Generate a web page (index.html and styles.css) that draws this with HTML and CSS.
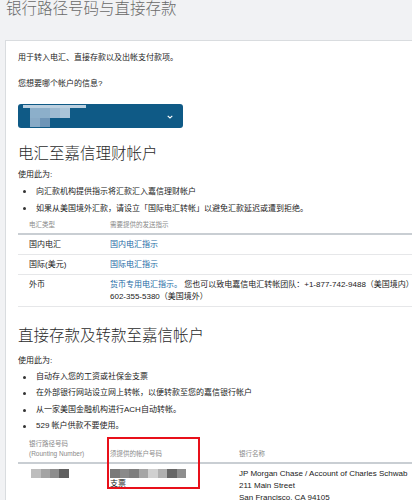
FILE: index.html
```html
<!DOCTYPE html>
<html lang="zh-CN">
<head>
  <meta charset="UTF-8" />
  <meta name="viewport" content="width=device-width, initial-scale=1" />
  <title>银行路径号码与直接存款</title>
  <link rel="stylesheet" href="styles.css">
</head>
<body>
  <h1 class="page-title">银行路径号码与直接存款</h1>

  <main class="card">
    <p class="intro">用于转入电汇、直接存款以及出帐支付款项。</p>
    <p class="ask">您想要哪个帐户的信息?</p>

    <div class="account-select" role="button" aria-label="选择帐户">
      <!-- masked account name -->
      <span class="mask">
        <span class="m-bar"></span>
        <span class="m-row"><i class="s1"></i><i class="s2"></i><i class="s3"></i></span>
        <span class="m-row"><i class="s4"></i><i class="s5"></i></span>
      </span>
      <svg class="chevron" width="6" height="4" viewBox="0 0 6 4" aria-hidden="true">
        <path d="M0.7 0.8 L3 3 L5.3 0.8" fill="none" stroke="#fff" stroke-width="1.1"/>
      </svg>
    </div>

    <section class="block wire">
      <h2>电汇至嘉信理财帐户</h2>
      <p class="use-for">使用此为:</p>
      <ul class="bullets">
        <li>向汇款机构提供指示将汇款汇入嘉信理财帐户</li>
        <li>如果从美国境外汇款，请设立「国际电汇转帐」以避免汇款延迟或遭到拒绝。</li>
      </ul>
      <table class="info-table">
        <thead>
          <tr>
            <th class="col-a">电汇类型</th>
            <th>需要提供的发送指示</th>
          </tr>
        </thead>
        <tbody>
          <tr>
            <td class="col-a">国内电汇</td>
            <td><a href="#">国内电汇指示</a></td>
          </tr>
          <tr>
            <td class="col-a">国际(美元)</td>
            <td><a href="#">国际电汇指示</a></td>
          </tr>
          <tr>
            <td class="col-a">外币</td>
            <td><a href="#">货币专用电汇指示。</a> 您也可以致电嘉信电汇转帐团队：+1-877-742-9488（美国境内） 602-355-5380（美国境外）</td>
          </tr>
        </tbody>
      </table>
    </section>

    <section class="block deposit">
      <h2>直接存款及转款至嘉信帐户</h2>
      <p class="use-for">使用此为:</p>
      <ul class="bullets">
        <li>自动存入您的工资或社保金支票</li>
        <li>在外部银行网站设立网上转帐，以便转款至您的嘉信银行帐户</li>
        <li>从一家美国金融机构进行ACH自动转帐。</li>
        <li>529 帐户供款不要使用。</li>
      </ul>
      <div class="table-wrap">
        <table class="info-table routing">
          <thead>
            <tr>
              <th class="col-a">银行路径号码<br>(Rounting Number)</th>
              <th class="col-b">须提供的帐户号码</th>
              <th>银行名称</th>
            </tr>
          </thead>
          <tbody>
            <tr>
              <td class="col-a">
                <span class="mask-num short"><i></i><i></i><i></i><i></i></span>
              </td>
              <td class="col-b">
                <span class="mask-num long"><i></i><i></i><i></i><i></i><i></i><i></i><i></i><i></i></span>
                支票
              </td>
              <td>JP Morgan Chase / Account of Charles Schwab<br>211 Main Street<br>San Francisco, CA 94105</td>
            </tr>
          </tbody>
        </table>
        <div class="highlight" aria-hidden="true"></div>
      </div>
    </section>
  </main>
</body>
</html>
```

FILE: styles.css
```css
:root {
  --page-bg: #f1f2f4;
  --card-border: #d9dcdf;
  --text: #222;
  --muted: #8a8a8a;
  --link: #1d6aa5;
  --select-bg: #0f5a86;
  --rule-strong: #c9ced3;
  --rule-light: #e6e7e9;
}
* {
  margin: 0; padding: 0; box-sizing: border-box;
}
body {
  font-family: "Liberation Sans", "Noto Sans CJK SC", sans-serif;
  background-color: var(--page-bg);
  color: var(--text);
  overflow: hidden;
  font-size: 8px;
  line-height: 12px;
}

.page-title {
  font-size: 15.5px;
  line-height: 18px;
  font-weight: 300;
  color: #6a6a6a;
  padding-left: 6px;
  margin-bottom: 22px;
}

.card {
  margin-left: 5px;
  width: 440px;
  background: #fff;
  border: 1px solid var(--card-border);
  padding: 11px 12px 20px 12px;
}
.ask {
  margin-top: 14px;
}

/* account dropdown */
.account-select {
  margin-top: 14px;
  width: 165px;
  height: 24px;
  border-radius: 3px;
  background: var(--select-bg);
  display: flex;
  align-items: flex-start;
  justify-content: space-between;
  padding: 1px 10px 0 5px;
}
.account-select .chevron {
  align-self: center;
}
.mask {
  display: flex;
  flex-direction: column;
}
.mask .m-bar {
  width: 63px; height: 3px;
  background: #bcd0e0;
}
.mask .m-row {
  display: flex;
  padding-left: 7px;
}
.mask i { display: block; }
.mask .s1 { width: 20px; height: 10px; background: #8cafca; }
.mask .s2 { width: 10px; height: 10px; background: #9dbad1; }
.mask .s3 { width: 10px; height: 10px; background: #aac5d9; }
.mask .s4 { width: 10px; height: 9px; background: #88aac6; }
.mask .s5 { width: 10px; height: 9px; background: #6e95b7; }

/* sections */
.block h2 {
  font-size: 15.5px;
  line-height: 20px;
  font-weight: 300;
  color: #2b2b2b;
}
.wire {
  margin-top: 16px;
}
.wire h2 { margin-bottom: 5px; }
.deposit {
  margin-top: 19px;
}
.deposit h2 { margin-bottom: 9px; }

.bullets {
  list-style: none;
  margin-top: 2px;
}
.bullets li {
  line-height: 17px;
  padding-left: 18px;
  position: relative;
}
.bullets li::before {
  content: "";
  position: absolute;
  left: 5px; top: 7px;
  width: 3px; height: 3px;
  border-radius: 50%;
  background: #333;
}
.deposit .bullets li { line-height: 16.4px; }
.deposit .bullets li::before { top: 6.7px; }

/* tables */
.info-table {
  width: 100%;
  border-collapse: collapse;
  margin-top: 3px;
}
.info-table th {
  font-size: 6.5px;
  line-height: 10px;
  font-weight: 400;
  color: var(--muted);
  text-align: left;
  vertical-align: bottom;
  padding: 0 12px 3px 11px;
  border-bottom: 2px solid var(--rule-strong);
}
.info-table td {
  padding: 4px 12px 3px 11px;
  vertical-align: top;
  border-bottom: 1px solid var(--rule-light);
}
.info-table .col-a { width: 81px; }
.info-table a {
  color: var(--link);
  text-decoration: none;
}

.table-wrap {
  position: relative;
}
.routing {
  margin-top: 4px;
}
.routing .col-b { width: 129px; }
.routing td {
  border-bottom: none;
  padding-top: 4px;
}

/* masked account numbers */
.mask-num {
  display: flex;
  height: 9px;
  margin-top: 1px;
}
.mask-num i { display: block; height: 9px; }
.mask-num.short { padding-left: 2px; }
.mask-num.short i:nth-child(1) { width: 10px; background: #bdbdbd; }
.mask-num.short i:nth-child(2) { width: 9px; background: #a3a3a3; }
.mask-num.short i:nth-child(3) { width: 9px; background: #8d8d8d; }
.mask-num.short i:nth-child(4) { width: 10px; background: #5f5f5f; }
.mask-num.long i { width: 9.5px; }
.mask-num.long i:nth-child(1) { background: #7a7a7a; }
.mask-num.long i:nth-child(2) { background: #8a8a8a; }
.mask-num.long i:nth-child(3) { background: #7e7e7e; }
.mask-num.long i:nth-child(4) { background: #a5a5a5; }
.mask-num.long i:nth-child(5) { background: #d0d0d0; }
.mask-num.long i:nth-child(6) { background: #b0b0b0; }
.mask-num.long i:nth-child(7) { background: #666; }
.mask-num.long i:nth-child(8) { background: #8e8e8e; }

/* red annotation frame over the account number column */
.highlight {
  position: absolute;
  left: 89px; top: -2px;
  width: 93px; height: 52px;
  border: 2px solid #e8101a;
}
```
